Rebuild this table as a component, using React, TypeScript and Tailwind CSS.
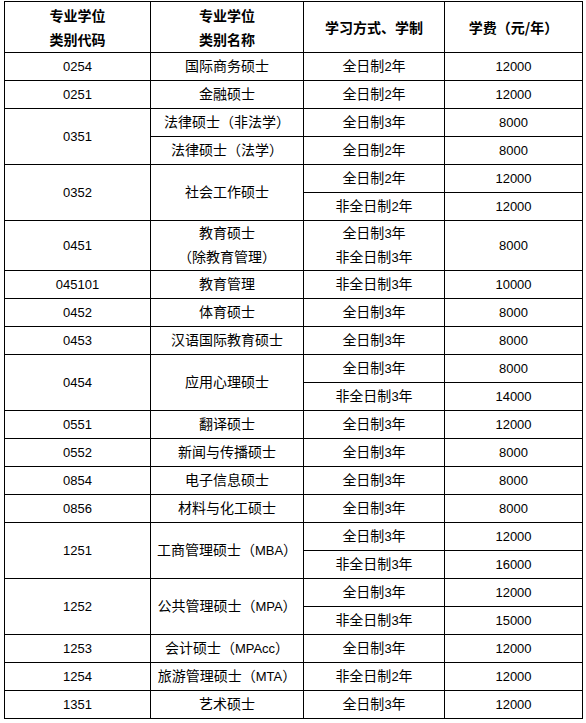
import React from "react";

type Cell = { t: React.ReactNode; rs?: number; num?: boolean };
type Row = { h: number; cells: Cell[] };

const F = "font-['Noto_Sans_CJK_SC',sans-serif]";

const N = (s: string) => <span className="font-['Liberation_Sans',sans-serif] text-[13px] leading-none">{s}</span>;

const rows: Row[] = [
  { h: 28, cells: [{ t: "0254", num: true }, { t: "国际商务硕士" }, { t: <>全日制{N("2")}年</> }, { t: "12000", num: true }] },
  { h: 28, cells: [{ t: "0251", num: true }, { t: "金融硕士" }, { t: <>全日制{N("2")}年</> }, { t: "12000", num: true }] },
  { h: 28, cells: [{ t: "0351", num: true, rs: 2 }, { t: "法律硕士（非法学）" }, { t: <>全日制{N("3")}年</> }, { t: "8000", num: true }] },
  { h: 28, cells: [{ t: "法律硕士（法学）" }, { t: <>全日制{N("2")}年</> }, { t: "8000", num: true }] },
  { h: 28, cells: [{ t: "0352", num: true, rs: 2 }, { t: "社会工作硕士", rs: 2 }, { t: <>全日制{N("2")}年</> }, { t: "12000", num: true }] },
  { h: 28, cells: [{ t: <>非全日制{N("2")}年</> }, { t: "12000", num: true }] },
  {
    h: 50,
    cells: [
      { t: "0451", num: true },
      { t: <>教育硕士<br />（除教育管理）</> },
      { t: <>全日制{N("3")}年<br />非全日制{N("3")}年</> },
      { t: "8000", num: true },
    ],
  },
  { h: 28, cells: [{ t: "045101", num: true }, { t: "教育管理" }, { t: <>非全日制{N("3")}年</> }, { t: "10000", num: true }] },
  { h: 28, cells: [{ t: "0452", num: true }, { t: "体育硕士" }, { t: <>全日制{N("3")}年</> }, { t: "8000", num: true }] },
  { h: 28, cells: [{ t: "0453", num: true }, { t: "汉语国际教育硕士" }, { t: <>全日制{N("3")}年</> }, { t: "8000", num: true }] },
  { h: 28, cells: [{ t: "0454", num: true, rs: 2 }, { t: "应用心理硕士", rs: 2 }, { t: <>全日制{N("3")}年</> }, { t: "8000", num: true }] },
  { h: 28, cells: [{ t: <>非全日制{N("3")}年</> }, { t: "14000", num: true }] },
  { h: 28, cells: [{ t: "0551", num: true }, { t: "翻译硕士" }, { t: <>全日制{N("3")}年</> }, { t: "12000", num: true }] },
  { h: 28, cells: [{ t: "0552", num: true }, { t: "新闻与传播硕士" }, { t: <>全日制{N("3")}年</> }, { t: "8000", num: true }] },
  { h: 28, cells: [{ t: "0854", num: true }, { t: "电子信息硕士" }, { t: <>全日制{N("3")}年</> }, { t: "8000", num: true }] },
  { h: 28, cells: [{ t: "0856", num: true }, { t: "材料与化工硕士" }, { t: <>全日制{N("3")}年</> }, { t: "8000", num: true }] },
  { h: 28, cells: [{ t: "1251", num: true, rs: 2 }, { t: <>工商管理硕士（{N("MBA")}）</>, rs: 2 }, { t: <>全日制{N("3")}年</> }, { t: "12000", num: true }] },
  { h: 28, cells: [{ t: <>非全日制{N("3")}年</> }, { t: "16000", num: true }] },
  { h: 28, cells: [{ t: "1252", num: true, rs: 2 }, { t: <>公共管理硕士（{N("MPA")}）</>, rs: 2 }, { t: <>全日制{N("3")}年</> }, { t: "12000", num: true }] },
  { h: 28, cells: [{ t: <>非全日制{N("3")}年</> }, { t: "15000", num: true }] },
  { h: 28, cells: [{ t: "1253", num: true }, { t: <>会计硕士（{N("MPAcc")}）</> }, { t: <>全日制{N("3")}年</> }, { t: "12000", num: true }] },
  { h: 28, cells: [{ t: "1254", num: true }, { t: <>旅游管理硕士（{N("MTA")}）</> }, { t: <>非全日制{N("2")}年</> }, { t: "12000", num: true }] },
  { h: 28, cells: [{ t: "1351", num: true }, { t: "艺术硕士" }, { t: <>全日制{N("3")}年</> }, { t: "12000", num: true }] },
];

export default function App() {
  return (
    <div className={`w-[586px] h-[723px] bg-white overflow-hidden pt-[1px] pl-[4px] ${F}`}>
      <table className="border-collapse table-fixed w-[578px] text-black text-[14px] leading-[24px]">
        <colgroup>
          <col className="w-[146px]" />
          <col className="w-[153px]" />
          <col className="w-[141px]" />
          <col className="w-[138px]" />
        </colgroup>
        <thead>
          <tr className="h-[51px]">
            <th className="border border-black p-0 text-center align-middle font-bold">专业学位<br />类别代码</th>
            <th className="border border-black p-0 text-center align-middle font-bold">专业学位<br />类别名称</th>
            <th className="border border-black p-0 text-center align-middle font-bold">学习方式、学制</th>
            <th className="border border-black p-0 text-center align-middle font-bold">学费（元/年）</th>
          </tr>
        </thead>
        <tbody>
          {rows.map((r, i) => (
            <tr key={i} style={{ height: r.h }}>
              {r.cells.map((c, j) => (
                <td
                  key={j}
                  rowSpan={c.rs}
                  className="border border-black p-0 text-center align-middle whitespace-nowrap"
                >
                  <div className="-mt-[4px]">
                    {c.num ? <span className="font-['Liberation_Sans',sans-serif] text-[13px] leading-none">{c.t}</span> : c.t}
                  </div>
                </td>
              ))}
            </tr>
          ))}
        </tbody>
      </table>
    </div>
  );
}
